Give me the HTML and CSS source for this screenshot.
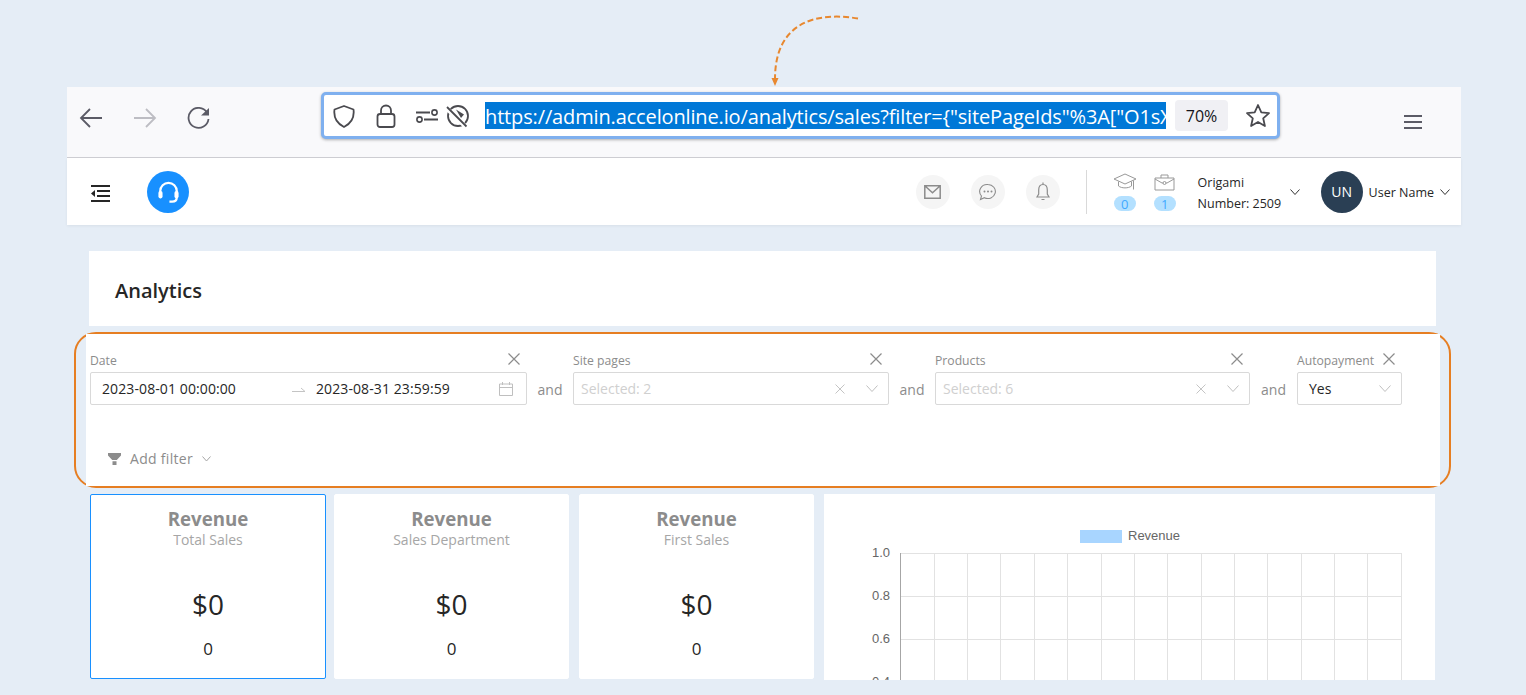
FILE: index.html
```html
<!DOCTYPE html>
<html lang="en">
<head>
  <meta charset="UTF-8" />
  <title>Analytics</title>
  <link rel="stylesheet" href="styles.css">
</head>
<body>

<!-- Hand drawn pointer to the address bar -->
<svg class="pointer" width="100" height="80" viewBox="0 0 100 80">
  <path d="M91 6.500C52 0 8 8 8 67" fill="none" stroke="#e8882f" stroke-width="2" stroke-dasharray="6 3"/>
  <path d="M4.500 66h7L8 74z" fill="#e8882f"/>
</svg>

<div class="frame">

  <!-- Browser toolbar -->
  <div class="toolbar">
    <svg class="tool-btn" width="24" height="22" viewBox="0 0 24 22"><path d="M23 11H2M11 2l-9 9 9 9" fill="none" stroke="#5b5b66" stroke-width="1.8"/></svg>
    <svg class="tool-btn" width="24" height="22" viewBox="0 0 24 22"><path d="M1 11h21M13 2l9 9-9 9" fill="none" stroke="#bdbdc3" stroke-width="1.8"/></svg>
    <svg class="tool-btn" width="24" height="22" viewBox="0 0 24 22"><path d="M20 5.500A10 10 0 1 0 21.500 12" fill="none" stroke="#5b5b66" stroke-width="1.8"/><path d="M14 8.500L22 1v7.500z" fill="#5b5b66"/></svg>

    <div class="urlbar">
      <svg class="url-icon shield" width="24" height="24" viewBox="0 0 24 24"><path d="M12 2L21.500 5.500C22.500 13 19 19.500 12 23C5 19.500 1.500 13 2.500 5.500z" fill="none" stroke="#4a4a4f" stroke-width="1.800" stroke-linejoin="round"/></svg>
      <svg class="url-icon lock" width="20" height="24" viewBox="0 0 20 24"><rect x="1.500" y="10" width="17" height="13" rx="2.500" fill="none" stroke="#4a4a4f" stroke-width="1.800"/><path d="M5 10V6.500a5 5 0 0 1 10 0V10" fill="none" stroke="#4a4a4f" stroke-width="1.800"/></svg>
      <svg class="url-icon sliders" width="22" height="16" viewBox="0 0 22 16"><path d="M0 4.500h14M8 11.500h14" stroke="#4a4a4f" stroke-width="1.800"/><circle cx="18.500" cy="4.500" r="2.600" fill="none" stroke="#4a4a4f" stroke-width="1.600"/><circle cx="3.500" cy="11.500" r="2.600" fill="none" stroke="#4a4a4f" stroke-width="1.600"/></svg>
      <svg class="url-icon tracking" width="24" height="24" viewBox="0 0 24 24"><circle cx="12" cy="12" r="10" fill="none" stroke="#4a4a4f" stroke-width="1.800"/><path d="M0 3.500L20 23" stroke="#fff" stroke-width="4.500"/><path d="M1 3L20.500 22.500" stroke="#4a4a4f" stroke-width="1.800"/><path d="M10 5.500L18 10.500 15 14z" fill="#4a4a4f"/></svg>
      <span class="url-text">https://admin.accelonline.io/analytics/sales?filter={"sitePageIds"%3A["O1sX</span>
      <span class="zoom-chip">70%</span>
      <svg class="star" width="26" height="25" viewBox="0 0 26 25"><path d="M13 2l3.300 7.300 7.700.800-5.800 5.200 1.700 7.700L13 19l-6.900 4 1.700-7.700L2 10.100l7.700-.800z" fill="none" stroke="#4a4a4f" stroke-width="1.800" stroke-linejoin="round"/></svg>
    </div>

    <svg class="burger" width="18" height="14" viewBox="0 0 18 14"><path d="M0 1h18M0 7h18M0 13h18" stroke="#5b5b66" stroke-width="1.800"/></svg>
  </div>

  <!-- App header -->
  <header class="app-header">
    <svg class="menu-toggle" width="19" height="17" viewBox="0 0 19 17"><path d="M0 1h19M6 6h13M6 11h13M0 16h19" stroke="#262626" stroke-width="1.800"/><path d="M4 5v7L0 8.500z" fill="#262626"/></svg>
    <div class="logo">
      <svg width="23" height="22" viewBox="0 0 24 24"><path d="M3 15V11a9 9 0 0 1 18 0v4" fill="none" stroke="#fff" stroke-width="2.400"/><rect x="1" y="11" width="4.500" height="8" rx="2" fill="#fff"/><rect x="18.500" y="11" width="4.500" height="8" rx="2" fill="#fff"/><path d="M21 18c0 3.500-2 4.500-5 4.500h-3" fill="none" stroke="#fff" stroke-width="2.400"/></svg>
    </div>

    <div class="header-right">
      <span class="round-btn"><svg width="17" height="14" viewBox="0 0 17 14"><path d="M.8.800h15.400v12.400H.8zM.8.800l7.700 7 7.700-7" fill="none" stroke="#8c8c8c" stroke-width="1.500"/></svg></span>
      <span class="round-btn"><svg width="18" height="18" viewBox="0 0 18 18"><path d="M9 1.500a7.500 7 0 1 1-3.600 13.200L1.500 16.500l1-3.500A7.500 7 0 0 1 9 1.500z" fill="none" stroke="#8c8c8c" stroke-width="1.100"/><circle cx="5.500" cy="8.500" r="1" fill="#8c8c8c"/><circle cx="9" cy="8.500" r="1" fill="#8c8c8c"/><circle cx="12.500" cy="8.500" r="1" fill="#8c8c8c"/></svg></span>
      <span class="round-btn"><svg width="14" height="19" viewBox="0 0 14 19"><path d="M7 2.500c-3 0-4.300 2.500-4.300 5.500v4L1 15h12l-1.700-3V8c0-3-1.300-5.500-4.300-5.500zM7 .500v2M5.500 17.500h3" fill="none" stroke="#8c8c8c" stroke-width="1.200"/></svg></span>

      <span class="header-divider"></span>

      <div class="counter">
        <svg width="24" height="18" viewBox="0 0 24 18"><path d="M12 1L23 6 12 11 1 6zM5.500 8.500v4.500c3 2.500 10 2.500 13 0V8.500M20.500 7.500v9" fill="none" stroke="#999" stroke-width="1"/></svg>
        <span class="badge">0</span>
      </div>
      <div class="counter counter-case">
        <svg width="21" height="18" viewBox="0 0 21 18"><path d="M1 5h19v12H1zM7 5V2h7v3M1 6l7 4h5l7-4" fill="none" stroke="#999" stroke-width="1"/><circle cx="10.500" cy="10" r="1.500" fill="#fff" stroke="#999"/></svg>
        <span class="badge">1</span>
      </div>

      <div class="company">
        <div>Origami</div>
        <div>Number: 2509</div>
      </div>
      <svg class="chev company-chev" width="10" height="6" viewBox="0 0 10 6"><path d="M.5.500L5 5.500 9.500.500" fill="none" stroke="#333" stroke-width="1"/></svg>

      <span class="avatar">UN</span>
      <span class="user-name">User Name</span>
      <svg class="chev" width="10" height="6" viewBox="0 0 10 6"><path d="M.5.500L5 5.500 9.500.500" fill="none" stroke="#333" stroke-width="1"/></svg>
    </div>
  </header>

  <section class="title-card">
    <h1>Analytics</h1>
  </section>

  <!-- Filters, circled in orange -->
  <section class="filter-ring">
    <div class="filter-panel">
      <div class="filter-row">
        <div class="filter date-filter">
          <div class="filter-label"><span>Date</span><svg class="close" width="12" height="12" viewBox="0 0 12 12"><path d="M.5.500l11 11M11.500.500l-11 11" stroke="#8c8c8c" stroke-width="1.200"/></svg></div>
          <div class="field">
            <span class="date-val">2023-08-01 00:00:00</span>
            <svg class="range-arrow" width="13" height="6" viewBox="0 0 13 6"><path d="M0 4.500h13L9 1" fill="none" stroke="#c4c4c4" stroke-width="1"/></svg>
            <span class="date-val">2023-08-31 23:59:59</span>
            <svg class="field-end" width="14" height="14" viewBox="0 0 14 14"><path d="M.5 2h13v11.500H.5zM.5 5.500h13M3.500 0v3M10.500 0v3" fill="none" stroke="#bfbfbf" stroke-width="1"/></svg>
          </div>
        </div>
        <span class="and">and</span>
        <div class="filter pages-filter">
          <div class="filter-label"><span>Site pages</span><svg class="close" width="12" height="12" viewBox="0 0 12 12"><path d="M.5.500l11 11M11.500.500l-11 11" stroke="#8c8c8c" stroke-width="1.200"/></svg></div>
          <div class="field">
            <span class="placeholder">Selected: 2</span>
            <svg class="field-x" width="10" height="10" viewBox="0 0 10 10"><path d="M.5.500l9 9M9.500.500l-9 9" stroke="#c4c4c4" stroke-width="1"/></svg>
            <svg class="field-chev" width="12" height="7" viewBox="0 0 12 7"><path d="M.5.500L6 6.500 11.500.500" fill="none" stroke="#bfbfbf" stroke-width="1"/></svg>
          </div>
        </div>
        <span class="and">and</span>
        <div class="filter products-filter">
          <div class="filter-label"><span>Products</span><svg class="close" width="12" height="12" viewBox="0 0 12 12"><path d="M.5.500l11 11M11.500.500l-11 11" stroke="#8c8c8c" stroke-width="1.200"/></svg></div>
          <div class="field">
            <span class="placeholder">Selected: 6</span>
            <svg class="field-x" width="10" height="10" viewBox="0 0 10 10"><path d="M.5.500l9 9M9.500.500l-9 9" stroke="#c4c4c4" stroke-width="1"/></svg>
            <svg class="field-chev" width="12" height="7" viewBox="0 0 12 7"><path d="M.5.500L6 6.500 11.500.500" fill="none" stroke="#bfbfbf" stroke-width="1"/></svg>
          </div>
        </div>
        <span class="and and-last">and</span>
        <div class="filter auto-filter">
          <div class="filter-label"><span>Autopayment</span><svg class="close" width="12" height="12" viewBox="0 0 12 12"><path d="M.5.500l11 11M11.500.500l-11 11" stroke="#8c8c8c" stroke-width="1.200"/></svg></div>
          <div class="field">
            <span class="select-val">Yes</span>
            <svg class="field-chev" width="12" height="7" viewBox="0 0 12 7"><path d="M.5.500L6 6.500 11.500.500" fill="none" stroke="#bfbfbf" stroke-width="1"/></svg>
          </div>
        </div>
      </div>

      <div class="add-filter">
        <svg width="13" height="12" viewBox="0 0 13 12"><path d="M0 0h13v2.500L8.800 7H4.200L0 2.500zM4.500 8.200h4V12h-4z" fill="#8c8c8c"/></svg>
        <span>Add filter</span>
        <svg class="chev" width="9" height="6" viewBox="0 0 9 6"><path d="M.5.500L4.500 5 8.500.500" fill="none" stroke="#a6a6a6" stroke-width="1"/></svg>
      </div>
    </div>
  </section>

  <!-- Stat cards and chart -->
  <section class="stats">
    <div class="stat stat-active">
      <div class="stat-title">Revenue</div>
      <div class="stat-sub">Total Sales</div>
      <div class="stat-money">$0</div>
      <div class="stat-count">0</div>
    </div>
    <div class="stat">
      <div class="stat-title">Revenue</div>
      <div class="stat-sub">Sales Department</div>
      <div class="stat-money">$0</div>
      <div class="stat-count">0</div>
    </div>
    <div class="stat">
      <div class="stat-title">Revenue</div>
      <div class="stat-sub">First Sales</div>
      <div class="stat-money">$0</div>
      <div class="stat-count">0</div>
    </div>
    <div class="chart-card">
      <svg width="611" height="185" viewBox="0 0 611 185">
        <rect x="256" y="35" width="42" height="13" fill="#a8d5ff"/>
        <text x="304" y="45" class="chart-text">Revenue</text>
        <g stroke="#e2e2e2" stroke-width="1">
          <path d="M76 58.500h502M76 101.500h502M76 144.500h502M76 187.500h502"/>
          <path d="M110.500 58v127M143.500 58v127M176.500 58v127M210.500 58v127M243.500 58v127M277.500 58v127M310.500 58v127M343.500 58v127M377.500 58v127M410.500 58v127M443.500 58v127M477.500 58v127M510.500 58v127M543.500 58v127M577.500 58v127"/>
        </g>
        <path d="M76.500 58v127" stroke="#a6a6a6" stroke-width="1"/>
        <text x="66" y="62" text-anchor="end" class="chart-text">1.0</text>
        <text x="66" y="105" text-anchor="end" class="chart-text">0.8</text>
        <text x="66" y="148" text-anchor="end" class="chart-text">0.6</text>
        <text x="66" y="191" text-anchor="end" class="chart-text">0.4</text>
      </svg>
    </div>
  </section>

</div>

</body>
</html>
```

FILE: styles.css
```css
body {
  margin: 0;
  height: 695px;
  overflow: hidden;
  background: #e5edf6;
  font-family: "Open Sans", "Noto Sans", sans-serif;
  color: #262626;
}

.pointer {
  position: absolute;
  top: 12px;
  left: 767px;
}

.frame {
  width: 1394px;
  margin-left: 67px;
  padding-top: 87px;
}

/* browser toolbar */
.toolbar {
  height: 70px;
  background: #f9f9fb;
  border-bottom: 1px solid #cfcfd4;
  display: flex;
  align-items: flex-start;
}

.tool-btn {
  margin: 20px 18px 0 12px;
}

.urlbar {
  width: 953px;
  height: 41px;
  margin: 5px 0 0 92px;
  background: #fff;
  border: 3px solid #7fb0ef;
  border-radius: 5px;
  box-shadow: 0 1px 3px rgba(0,0,0,0.3);
  display: flex;
  align-items: center;
  flex-shrink: 0;
}

.url-icon {
  flex-shrink: 0;
}

.shield { margin-left: 8px; }
.lock { margin-left: 20px; }
.sliders { margin-left: 20px; }
.tracking { margin-left: 8px; }

.url-text {
  margin-left: 15px;
  width: 681px;
  height: 27px;
  overflow: hidden;
  white-space: nowrap;
  background: #0078d7;
  color: #fff;
  font-size: 20px;
  line-height: 30px;
  letter-spacing: -0.14px;
}

.zoom-chip {
  margin-left: 9px;
  width: 53px;
  height: 31px;
  background: #f0f0f4;
  border-radius: 4px;
  font-size: 16px;
  line-height: 32px;
  text-align: center;
  color: #15141a;
}

.star {
  margin-left: 17px;
}

.burger {
  margin: 28px 0 0 124px;
}

/* app header */
.app-header {
  height: 67px;
  background: #fff;
  display: flex;
  align-items: center;
  box-shadow: 0 1px 3px rgba(0,0,0,0.06);
}

.menu-toggle {
  margin: 3px 0 0 24px;
}

.logo {
  width: 42px;
  height: 42px;
  margin-left: 37px;
  border-radius: 50%;
  background: #1890ff;
  display: flex;
  align-items: center;
  justify-content: center;
}

.header-right {
  margin-left: auto;
  display: flex;
  align-items: center;
  padding-right: 11px;
}

.round-btn {
  width: 34px;
  height: 34px;
  margin-right: 21px;
  border-radius: 50%;
  background: #f5f5f5;
  display: flex;
  align-items: center;
  justify-content: center;
}

.header-divider {
  width: 1px;
  height: 44px;
  margin: 0 26px 0 5px;
  background: #d9d9d9;
}

.counter {
  width: 24px;
  display: flex;
  flex-direction: column;
  align-items: center;
  gap: 5px;
}

.counter-case {
  margin-left: 16px;
}

.badge {
  width: 22px;
  height: 15px;
  border-radius: 8px;
  background: #b3e0ff;
  color: #40a9ff;
  font-size: 13px;
  line-height: 16px;
  text-align: center;
}

.company {
  width: 83px;
  margin: 2px 0 0 21px;
  font-size: 12.5px;
  line-height: 21px;
  white-space: nowrap;
}

.company-chev {
  margin-left: 9px;
}

.avatar {
  width: 42px;
  height: 42px;
  margin-left: 21px;
  border-radius: 50%;
  background: #2a3f54;
  color: #fff;
  font-size: 14px;
  line-height: 42px;
  text-align: center;
}

.user-name {
  margin: 2px 6px 0 6px;
  font-size: 12.5px;
  white-space: nowrap;
}

/* page title */
.title-card {
  width: 1347px;
  height: 75px;
  margin: 26px 0 0 22px;
  background: #fff;
  display: flex;
  align-items: center;
}

.title-card h1 {
  margin: 4px 0 0 26px;
  font-size: 20px;
  font-weight: 600;
}

/* filters */
.filter-ring {
  width: 1354px;
  height: 152px;
  margin: 6px 0 0 7px;
  padding: 0 9px 0 10px;
  border: 2px solid #e67e22;
  border-radius: 22px;
}

.filter-panel {
  height: 100%;
  padding: 16px 0 0 4px;
  box-sizing: border-box;
  background: #fff;
}

.filter-row {
  display: flex;
  align-items: flex-end;
}

.filter-label {
  height: 20px;
  margin-bottom: 2px;
  padding-right: 7px;
  display: flex;
  align-items: center;
  justify-content: space-between;
  font-size: 12.2px;
  color: #8c8c8c;
}

.close {
  margin-top: -2px;
}

.field {
  height: 33px;
  box-sizing: border-box;
  border: 1px solid #d9d9d9;
  border-radius: 2px;
  display: flex;
  align-items: center;
  font-size: 14px;
  background: #fff;
}

.date-filter { width: 437px; }
.pages-filter { width: 316px; }
.products-filter { width: 315px; }
.auto-filter { width: 105px; }

.date-val {
  margin-left: 11px;
  white-space: nowrap;
  letter-spacing: 0.1px;
}

.range-arrow {
  margin: 2px 11px 0 56px;
}

.range-arrow + .date-val {
  margin-left: 0;
}

.field-end {
  margin-left: auto;
  margin-right: 13px;
}

.and {
  width: 46px;
  height: 33px;
  text-align: center;
  font-size: 14px;
  line-height: 35px;
  color: #8c8c8c;
}

.and-last {
  width: 47px;
}

.placeholder {
  margin-left: 7px;
  color: #d0d0d0;
}

.field-x {
  margin-left: auto;
}

.field-chev {
  margin: 0 10px 0 21px;
}

.select-val {
  margin-left: 11px;
}

.auto-filter .field-chev {
  margin-left: auto;
}

.add-filter {
  margin: 44px 0 0 18px;
  display: flex;
  align-items: center;
  font-size: 14px;
  letter-spacing: 0.3px;
  color: #8c8c8c;
}

.add-filter span {
  margin: 0 9px;
}

/* stats */
.stats {
  margin: 6px 0 0 23px;
  display: flex;
  gap: 10px;
}

.stat {
  width: 235px;
  height: 185px;
  background: #fff;
  border: 1px solid #fff;
  border-radius: 2px;
  box-sizing: border-box;
  text-align: center;
  padding-top: 12px;
}

.stat-active {
  width: 236px;
  margin-right: -2px;
  border-color: #1890ff;
}

.stat-title {
  font-size: 18.7px;
  line-height: 24px;
  font-weight: 700;
  color: #8c8c8c;
}

.stat-sub {
  font-size: 14px;
  line-height: 18px;
  color: #a6a6a6;
}

.stat-money {
  margin-top: 34px;
  font-size: 28px;
  line-height: 42px;
}

.stat-count {
  margin-top: 13px;
  font-size: 17px;
  line-height: 22px;
}

.chart-card {
  width: 611px;
  height: 186px;
  padding-top: 1px;
  box-sizing: border-box;
  background: #fff;
  overflow: hidden;
}

.chart-card svg {
  display: block;
}

.chart-text {
  font-family: "Liberation Sans", sans-serif;
  font-size: 13px;
  fill: #666;
}
```
